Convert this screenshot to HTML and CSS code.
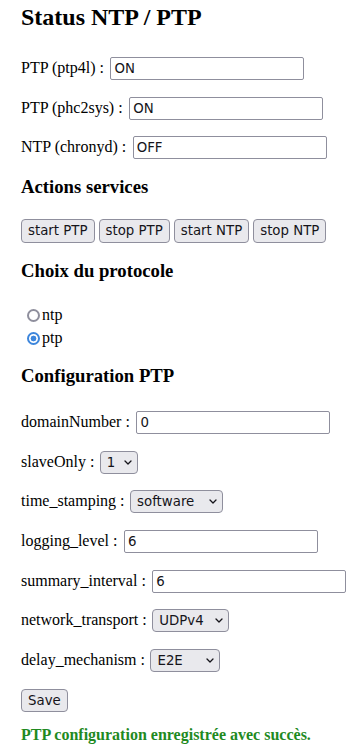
FILE: index.html
```html
<!DOCTYPE html>
<html lang="fr">
<head>
<meta charset="utf-8">
<title>Status NTP / PTP</title>
<link rel="stylesheet" href="styles.css">
</head>
<body>
<div class="page">
  <h2 class="title">Status NTP / PTP</h2>
  <p class="row first"><label>PTP (ptp4l) :&nbsp;</label><input class="field" type="text" value="ON" readonly></p>
  <p class="row"><label>PTP (phc2sys) :&nbsp;</label><input class="field" type="text" value="ON" readonly></p>
  <p class="row"><label>NTP (chronyd) :&nbsp;</label><input class="field" type="text" value="OFF" readonly></p>

  <h3 class="section s-actions">Actions services</h3>
  <p class="buttons"><button class="btn">start PTP</button><button class="btn">stop PTP</button><button class="btn">start NTP</button><button class="btn">stop NTP</button></p>

  <h3 class="section s-choice">Choix du protocole</h3>
  <div class="radios">
    <label class="radio-row"><input class="radio" type="radio" name="proto" value="ntp">ntp</label>
    <label class="radio-row"><input class="radio" type="radio" name="proto" value="ptp" checked>ptp</label>
  </div>

  <h3 class="section s-config">Configuration PTP</h3>
  <form class="config">
    <p class="row first-config"><label>domainNumber :&nbsp;</label><input class="field" type="text" value="0"></p>
    <p class="row"><label>slaveOnly :&nbsp;</label><span class="select-wrap"><select class="sel sel-slave"><option>0</option><option selected>1</option></select><svg class="chev" viewBox="0 0 8 5" width="8" height="5"><path d="M1 1 L4 4 L7 1" fill="none" stroke="#15141a" stroke-width="1.3" stroke-linecap="round" stroke-linejoin="round"/></svg></span></p>
    <p class="row"><label>time_stamping :&nbsp;</label><span class="select-wrap"><select class="sel sel-time"><option selected>software</option><option>hardware</option></select><svg class="chev" viewBox="0 0 8 5" width="8" height="5"><path d="M1 1 L4 4 L7 1" fill="none" stroke="#15141a" stroke-width="1.3" stroke-linecap="round" stroke-linejoin="round"/></svg></span></p>
    <p class="row"><label>logging_level :&nbsp;</label><input class="field" type="text" value="6"></p>
    <p class="row"><label>summary_interval :&nbsp;</label><input class="field" type="text" value="6"></p>
    <p class="row"><label>network_transport :&nbsp;</label><span class="select-wrap"><select class="sel sel-net"><option selected>UDPv4</option><option>UDPv6</option><option>L2</option></select><svg class="chev" viewBox="0 0 8 5" width="8" height="5"><path d="M1 1 L4 4 L7 1" fill="none" stroke="#15141a" stroke-width="1.3" stroke-linecap="round" stroke-linejoin="round"/></svg></span></p>
    <p class="row"><label>delay_mechanism :&nbsp;</label><span class="select-wrap"><select class="sel sel-delay"><option selected>E2E</option><option>P2P</option><option>Auto</option></select><svg class="chev" viewBox="0 0 8 5" width="8" height="5"><path d="M1 1 L4 4 L7 1" fill="none" stroke="#15141a" stroke-width="1.3" stroke-linecap="round" stroke-linejoin="round"/></svg></span></p>
    <p class="row"><button class="btn save" type="button">Save</button></p>
  </form>
  <p class="success">PTP configuration enregistrée avec succès.</p>
</div>
</body>
</html>
```
FILE: styles.css
```css
html, body {
  margin: 0;
  background: #fff;
}
body {
  font-family: "Liberation Serif", "Times New Roman", serif;
  font-size: 16px;
  color: #000;
}
.page {
  display: flex;
  flex-direction: column;
  align-items: flex-start;
  padding: 3.5px 21px 0;
}
.title {
  font-size: 24px;
  font-weight: bold;
  margin: 0;
  line-height: 27.6px;
}
.section {
  font-size: 18.72px;
  font-weight: bold;
  margin: 0;
  line-height: 21.5px;
}
.s-actions { margin-top: 16.5px; }
.s-choice { margin-top: 17px; }
.s-config { margin-top: 15.5px; }

.row {
  display: flex;
  align-items: baseline;
  margin: 16.7px 0 0;
  white-space: nowrap;
}
.row.first { margin-top: 25.9px; }
.config {
  display: flex;
  flex-direction: column;
  align-items: flex-start;
  margin: 0;
}
.row.first-config { margin-top: 24.5px; }

.field {
  box-sizing: border-box;
  width: 194px;
  height: 23px;
  margin: 0 0 0 2.5px;
  padding: 0 3px;
  border: 1px solid #8f8f9d;
  border-radius: 2px;
  background: #fff;
  font-family: "DejaVu Sans", sans-serif;
  font-size: 13.33px;
  color: #15141a;
  outline: none;
}

.buttons {
  display: flex;
  gap: 4px;
  margin: 21.5px 0 0;
}
.btn {
  box-sizing: border-box;
  height: 24px;
  margin: 0;
  padding: 0 6px;
  border: 1px solid #8f8f9d;
  border-radius: 4px;
  background: #e9e9ed;
  font-family: "DejaVu Sans", sans-serif;
  font-size: 13.33px;
  color: #15141a;
}
.btn.save { height: 23.5px; }

.radios {
  display: flex;
  flex-direction: column;
  margin-top: 22px;
}
.radio-row {
  display: flex;
  align-items: center;
  height: 23px;
}
.radio {
  appearance: none;
  -webkit-appearance: none;
  box-sizing: border-box;
  width: 13px;
  height: 13px;
  margin: 1px 2px 0 6px;
  border: 2px solid #8f8f9d;
  border-radius: 50%;
  background: #fff;
}
.radio:checked {
  border-color: #3d86dc;
  background: radial-gradient(circle, #3d86dc 0 2.6px, #fff 3.2px);
}

.select-wrap {
  position: relative;
  display: inline-flex;
  margin-left: 1.5px;
}
.sel {
  appearance: none;
  -webkit-appearance: none;
  box-sizing: border-box;
  height: 23px;
  margin: 0;
  padding: 0 0 0 6px;
  border: 1px solid #8f8f9d;
  border-radius: 4px;
  background: #e9e9ed;
  font-family: "DejaVu Sans", sans-serif;
  font-size: 13.33px;
  color: #15141a;
}
.sel-slave { width: 38px; }
.sel-time { width: 93px; }
.sel-net { width: 77px; }
.sel-delay { width: 70px; }
.chev {
  position: absolute;
  right: 6px;
  top: 9px;
  pointer-events: none;
}

.success {
  margin: 14px 0 0;
  color: #1f8a1f;
  font-weight: bold;
}
```
